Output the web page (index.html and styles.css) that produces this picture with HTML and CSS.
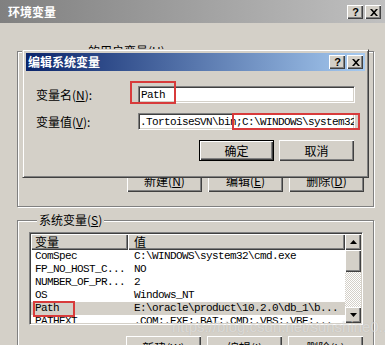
FILE: index.html
```html
<!DOCTYPE html>
<html lang="zh-CN">
<head>
  <meta charset="UTF-8" />
  <title>环境变量</title>
  <link rel="stylesheet" href="styles.css">
</head>
<body>
  <div class="win">
    <div class="wtitle">
      <span class="ttext">环境变量</span>
      <div class="tbtns">
        <span class="tbtn">?</span>
        <span class="tbtn"><svg width="8" height="7" viewBox="0 0 8 7"><path d="M0 0h2l2 2.2L6 0h2L5 3.5 8 7H6L4 4.8 2 7H0l3-3.5z" fill="#000"/></svg></span>
      </div>
    </div>

    <div class="wbody">
      <fieldset class="group">
        <legend class="ulegend">的用户变量(<u>U</u>)</legend>
        <div class="listview blank"></div>
        <div class="btnrow">
          <span class="btn">新建(<u>N</u>)</span>
          <span class="btn">编辑(<u>E</u>)</span>
          <span class="btn">删除(<u>D</u>)</span>
        </div>
      </fieldset>

      <fieldset class="group sys">
        <legend>系统变量(<u>S</u>)</legend>
        <div class="listview">
          <div class="lvmain">
            <div class="lvhead">
              <span class="hc c1">变量</span>
              <span class="hc c2">值</span>
            </div>
            <div class="lvrow"><span class="c1">ComSpec</span><span class="c2">C:\WINDOWS\system32\cmd.exe</span></div>
            <div class="lvrow"><span class="c1">FP_NO_HOST_C...</span><span class="c2">NO</span></div>
            <div class="lvrow"><span class="c1">NUMBER_OF_PR...</span><span class="c2">2</span></div>
            <div class="lvrow"><span class="c1">OS</span><span class="c2">Windows_NT</span></div>
            <div class="lvrow sel"><span class="c1">Path<i class="mark m3"></i></span><span class="c2">E:\oracle\product\10.2.0\db_1\b...</span></div>
            <div class="lvrow"><span class="c1">PATHEXT</span><span class="c2">.COM;.EXE;.BAT;.CMD;.VBS;.VBE;...</span></div>
          </div>
          <div class="vscroll">
            <span class="sbtn"><svg width="7" height="4" viewBox="0 0 7 4"><path d="M3.5 0L7 4H0z" fill="#000"/></svg></span>
            <span class="sthumb"></span>
            <span class="strack"></span>
            <span class="sbtn"><svg width="7" height="4" viewBox="0 0 7 4"><path d="M0 0h7L3.5 4z" fill="#000"/></svg></span>
          </div>
        </div>
        <div class="btnrow">
          <span class="btn">新建(<u>W</u>)</span>
          <span class="btn">编辑(<u>I</u>)</span>
          <span class="btn">删除(<u>L</u>)</span>
        </div>
      </fieldset>
    </div>

    <div class="dialog">
      <div class="dtitle">
        <span class="ttext">编辑系统变量</span>
        <div class="tbtns">
          <span class="tbtn">?</span>
          <span class="tbtn"><svg width="8" height="7" viewBox="0 0 8 7"><path d="M0 0h2l2 2.2L6 0h2L5 3.5 8 7H6L4 4.8 2 7H0l3-3.5z" fill="#000"/></svg></span>
        </div>
      </div>
      <div class="dbody">
        <div class="frow">
          <label>变量名(<u>N</u>):</label>
          <div class="edit"><span class="val">Path</span></div>
          <i class="mark m1"></i>
        </div>
        <div class="frow">
          <label>变量值(<u>V</u>):</label>
          <div class="edit"><span class="val">.TortoiseSVN\bin;C:\WINDOWS\system32</span><span class="caret"></span></div>
          <i class="mark m2"></i>
        </div>
        <div class="dbtns">
          <span class="btn def">确定</span>
          <span class="btn">取消</span>
        </div>
      </div>
    </div>

    <div class="wmark">https://blog.csdn.net/sunshine0...</div>
  </div>
</body>
</html>
```

FILE: styles.css
```css
body {
  margin: 0;
  background: #d4d0c8;
  font-family: "Noto Sans CJK SC", "Liberation Sans", sans-serif;
  font-size: 12px;
  color: #000;
}

u {
  text-decoration: underline;
  text-underline-offset: 1px;
}

.win {
  width: 385px;
  height: 345px;
  position: relative;
  overflow: hidden;
  background: #d4d0c8;
}

.wtitle {
  height: 23px;
  box-sizing: border-box;
  background: linear-gradient(to right, #808080, #c0c0c0);
  display: flex;
  justify-content: space-between;
  align-items: center;
  padding: 1px 4px 0 8px;
}

.ttext {
  color: #fff;
  font-weight: bold;
  font-size: 12px;
  line-height: 14px;
}

.tbtns {
  display: flex;
  gap: 2px;
}

.tbtn {
  width: 16px;
  height: 14px;
  box-sizing: border-box;
  background: #d4d0c8;
  box-shadow: inset 1px 1px #fff, inset -1px -1px #404040, inset -2px -2px #808080;
  display: flex;
  align-items: center;
  justify-content: center;
  font-family: "Liberation Sans", sans-serif;
  font-weight: bold;
  font-size: 11px;
  line-height: 14px;
  padding-left: 1px;
}

.wbody {
  padding: 21px 11px 0 17px;
}

.group {
  margin: 0;
  padding: 6px 9px 14px 11px;
  border: 1px solid #808080;
  box-shadow: inset 1px 1px #fff, 1px 1px #fff;
  min-width: 0;
}

.group legend {
  padding: 0 2px;
  margin-left: 8px;
  line-height: 14px;
  background: #d4d0c8;
  position: relative;
}

.group .ulegend {
  margin-left: 57px;
}

.group.sys {
  margin-top: 6px;
  padding-top: 5px;
  padding-right: 10px;
}

.listview {
  height: 93px;
  box-sizing: border-box;
  background: #fff;
  border: 1px solid;
  border-color: #808080 #fff #fff #808080;
  box-shadow: inset 1px 1px #404040, inset -1px -1px #d4d0c8;
  padding: 1px;
  display: flex;
  overflow: hidden;
}

.listview.blank {
  height: 99px;
}

.lvmain {
  flex: 1;
  min-width: 0;
  overflow: hidden;
}

.lvhead {
  display: flex;
  height: 16px;
}

.hc {
  height: 16px;
  box-sizing: border-box;
  background: #d4d0c8;
  box-shadow: inset 1px 1px #fff, inset -1px -1px #404040, inset -2px -2px #808080;
  line-height: 16px;
}

.lvhead .c1 {
  width: 97px;
  padding-left: 4px;
}

.lvhead .c2 {
  flex: 1;
  padding-left: 6px;
}

.lvrow {
  display: flex;
  height: 13px;
  line-height: 13px;
  font-family: "Liberation Mono", monospace;
  font-size: 11px;
  letter-spacing: -0.6px;
  white-space: nowrap;
}

.lvrow .c1 {
  width: 97px;
  box-sizing: border-box;
  padding-left: 4px;
  position: relative;
}

.lvrow .c2 {
  flex: 1;
  padding-left: 6px;
}

.lvrow.sel {
  background: #d4d0c8;
}

.vscroll {
  width: 16px;
  display: flex;
  flex-direction: column;
}

.sbtn {
  height: 16px;
  flex: none;
  box-sizing: border-box;
  background: #d4d0c8;
  box-shadow: inset 1px 1px #fff, inset -1px -1px #404040, inset -2px -2px #808080;
  display: flex;
  align-items: center;
  justify-content: center;
}

.sthumb {
  height: 22px;
  flex: none;
  background: #d4d0c8;
  box-shadow: inset 1px 1px #fff, inset -1px -1px #404040, inset -2px -2px #808080;
}

.strack {
  flex: 1;
  background-color: #fff;
  background-image: repeating-conic-gradient(#d4d0c8 0 25%, #fff 0 50%);
  background-size: 2px 2px;
}

.btnrow {
  display: flex;
  justify-content: flex-end;
  gap: 6px;
  margin-top: 6px;
}

.sys .btnrow {
  margin-top: 11px;
  padding-right: 0;
}

.btn {
  width: 75px;
  height: 23px;
  box-sizing: border-box;
  background: #d4d0c8;
  box-shadow: inset 1px 1px #fff, inset -1px -1px #404040, inset -2px -2px #808080;
  display: flex;
  align-items: center;
  justify-content: center;
  line-height: 14px;
}

/* dialog on top */
.dialog {
  position: absolute;
  left: 22px;
  top: 49px;
  width: 347px;
  height: 129px;
  box-sizing: border-box;
  background: #d4d0c8;
  border: 1px solid;
  border-color: #d4d0c8 #404040 #404040 #d4d0c8;
  box-shadow: inset 1px 1px #fff, inset -1px -1px #808080;
  padding: 3px;
}

.dtitle {
  height: 18px;
  background: linear-gradient(to right, #0a246a, #a6caf0);
  display: flex;
  justify-content: space-between;
  align-items: center;
  padding: 0 2px 0 2px;
}

.dbody {
  padding: 15px 10px 0 10px;
}

.frow {
  display: flex;
  align-items: center;
  position: relative;
  margin-bottom: 10px;
}

.frow label {
  width: 102px;
  line-height: 14px;
}

.edit {
  width: 217px;
  height: 17px;
  box-sizing: border-box;
  background: #fff;
  border: 1px solid;
  border-color: #808080 #fff #fff #808080;
  box-shadow: inset 1px 1px #404040, inset -1px -1px #d4d0c8;
  padding: 1px 1px 0 2px;
  overflow: hidden;
  white-space: nowrap;
  display: flex;
  font-family: "Liberation Mono", monospace;
  font-size: 11px;
  letter-spacing: -0.6px;
  line-height: 14px;
}

.frow:nth-child(2) .edit {
  padding-left: 1px;
}

.caret {
  width: 1px;
  height: 12px;
  margin-top: 1px;
  background: #000;
  flex: none;
}

.mark {
  position: absolute;
  border: 2px solid #d83b3b;
  box-sizing: border-box;
  pointer-events: none;
}

.m1 {
  left: 94px;
  top: -5px;
  width: 46px;
  height: 23px;
}

.m2 {
  left: 196px;
  top: 0;
  width: 128px;
  height: 17px;
}

.m3 {
  left: 2px;
  top: -1px;
  width: 42px;
  height: 16px;
}

.dbtns {
  display: flex;
  justify-content: flex-end;
  gap: 5px;
  margin-top: 3px;
  padding-right: 1px;
}

.dbtns .btn {
  height: 21px;
}

.btn.def {
  border: 1px solid #000;
}

.wmark {
  position: absolute;
  left: 172px;
  top: 318px;
  font-family: "Liberation Sans", sans-serif;
  font-size: 15px;
  color: rgba(255, 255, 255, 0.45);
  text-shadow: 0 0 1px rgba(120, 120, 120, 0.3);
  white-space: nowrap;
}
```
